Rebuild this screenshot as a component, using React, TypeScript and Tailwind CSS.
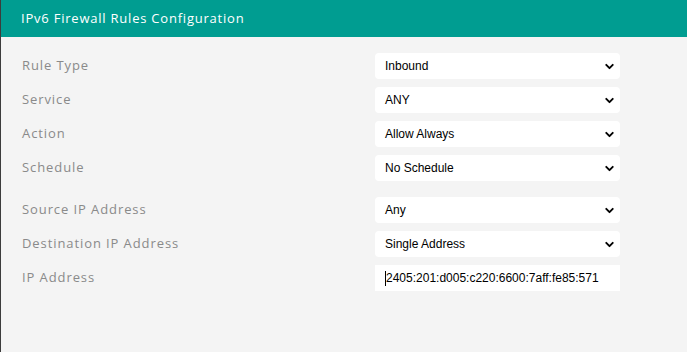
import { ChevronDown } from 'lucide-react'

const groupOne = [
    { label: 'Rule Type', value: 'Inbound' },
    { label: 'Service', value: 'ANY' },
    { label: 'Action', value: 'Allow Always' },
    { label: 'Schedule', value: 'No Schedule' },
]

const groupTwo = [
    { label: 'Source IP Address', value: 'Any' },
    { label: 'Destination IP Address', value: 'Single Address' },
]

function Row({ label, children }: { label: string; children: React.ReactNode }) {
    return (
        <div className="flex items-center h-[26px]">
            <span className="w-[374px] pl-[21px] text-[13px] tracking-[0.07em] text-[#8a8a8a] font-['Open_Sans',sans-serif]">
                {label}
            </span>
            {children}
        </div>
    )
}

function FakeSelect({ value }: { value: string }) {
    return (
        <div className="w-[245px] h-[26px] bg-white rounded-[4px] flex items-center justify-between pl-[10px] pr-[4px] text-[12px] text-black font-['Liberation_Sans',Arial,sans-serif]">
            <span>{value}</span>
            <ChevronDown className="w-[13px] h-[13px]" strokeWidth={3.5} />
        </div>
    )
}

export default function App() {
    return (
        <div className="w-full h-[352px] bg-[#f4f4f4] border-l border-[#3c3c3c] flex flex-col">
            <div className="h-[37px] bg-[#009d91] flex items-center px-[20px]">
                <span className="text-white text-[13px] tracking-[0.06em] font-['Open_Sans',sans-serif] font-medium">
                    IPv6 Firewall Rules Configuration
                </span>
            </div>

            <div className="pt-[16px] flex flex-col gap-[8px]">
                {groupOne.map((r) => (
                    <Row key={r.label} label={r.label}>
                        <FakeSelect value={r.value} />
                    </Row>
                ))}
            </div>

            <div className="pt-[16px] flex flex-col gap-[8px]">
                {groupTwo.map((r) => (
                    <Row key={r.label} label={r.label}>
                        <FakeSelect value={r.value} />
                    </Row>
                ))}
                <Row label="IP Address">
                    <div className="w-[245px] h-[26px] bg-white flex items-center pl-[10px] text-[12px] text-black font-['Liberation_Sans',Arial,sans-serif]">
                        <span className="w-px h-[15px] bg-black" />
                        <span>2405:201:d005:c220:6600:7aff:fe85:571</span>
                    </div>
                </Row>
            </div>
        </div>
    )
}
